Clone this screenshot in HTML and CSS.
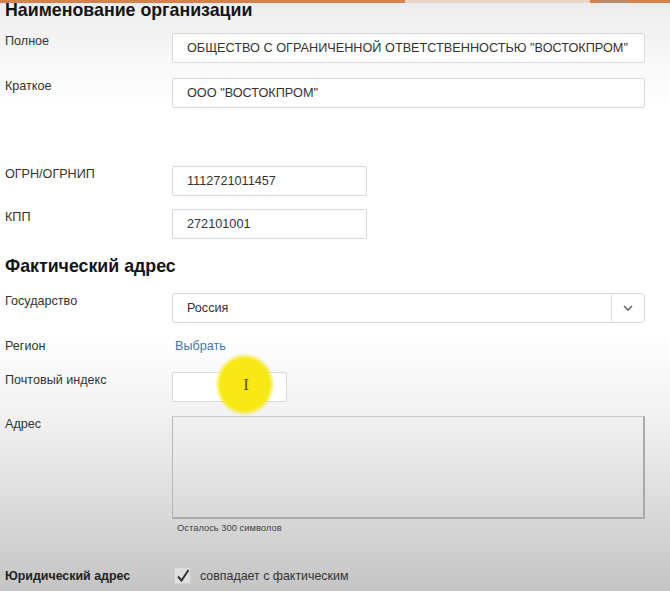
FILE: index.html
```html
<!DOCTYPE html>
<html lang="ru">
<head>
    <meta charset="UTF-8">
    <meta name="viewport" content="width=device-width, initial-scale=1.0">
    <title>Регистрация организации</title>
    <link rel="stylesheet" href="styles.css">
</head>
<body>

    <div class="topbar"><span class="tab"></span><span class="tab-end"></span></div>

    <div class="form">
        <h2 class="section-title first">Наименование организации</h2>

        <div class="row">
            <label class="label">Полное</label>
            <div class="input wide">ОБЩЕСТВО С ОГРАНИЧЕННОЙ ОТВЕТСТВЕННОСТЬЮ "ВОСТОКПРОМ"</div>
        </div>
        <div class="row">
            <label class="label">Краткое</label>
            <div class="input wide">ООО "ВОСТОКПРОМ"</div>
        </div>

        <div class="row spaced">
            <label class="label">ОГРН/ОГРНИП</label>
            <div class="input medium">1112721011457</div>
        </div>
        <div class="row">
            <label class="label">КПП</label>
            <div class="input medium">272101001</div>
        </div>

        <h2 class="section-title">Фактический адрес</h2>

        <div class="row">
            <label class="label">Государство</label>
            <div class="select wide">
                <span class="select-value">Россия</span>
                <span class="select-arrow">
                    <svg width="10" height="6" viewBox="0 0 10 6"><path d="M1 1l4 4 4-4" fill="none" stroke="#666" stroke-width="1.6"/></svg>
                </span>
            </div>
        </div>
        <div class="row region">
            <label class="label">Регион</label>
            <a class="link" href="#">Выбрать</a>
        </div>
        <div class="row">
            <label class="label">Почтовый индекс</label>
            <div class="input short"></div>
        </div>
        <div class="row address">
            <label class="label">Адрес</label>
            <div class="field">
                <div class="textarea wide"></div>
                <div class="hint">Осталось 300 символов</div>
            </div>
        </div>

        <div class="row legal">
            <span class="label bold">Юридический адрес</span>
            <span class="checkbox">
                <svg width="14" height="14" viewBox="0 0 14 14"><path d="M2 7.5l3.5 4L12.5 1" fill="none" stroke="#333" stroke-width="2"/></svg>
            </span>
            <span class="check-text">совпадает с фактическим</span>
        </div>
    </div>

    <!-- cursor highlight from the screen recording -->
    <div class="cursor-spot"><span class="ibeam">I</span></div>

</body>
</html>
```

FILE: styles.css
```css
* {
    margin: 0;
    padding: 0;
    box-sizing: border-box;
}

body {
    font-family: "Liberation Sans", Arial, sans-serif;
    color: #333;
    height: 591px;
    overflow: hidden;
    background: linear-gradient(180deg, #ececec 0px, #f8f8f8 60px, #ffffff 110px, #ffffff 330px, #f3f3f3 410px, #e2e2e2 480px, #d2d2d2 540px, #c4c4c4 591px);
}

.topbar {
    height: 3px;
    background: #d5814e;
    display: flex;
}

.topbar .tab {
    width: 185px;
    margin-left: 405px;
    background: #e9d6c9;
}

.topbar .tab-end {
    width: 30px;
    margin-left: 8px;
    background: #b9876a;
}

.form {
    padding: 0 25px 0 5px;
}

.section-title {
    font-size: 17.8px;
    line-height: 20px;
    font-weight: bold;
    color: #151515;
    margin: 17px 0 17px;
}

.section-title.first {
    margin: -3px 0 13px;
}

.row {
    display: flex;
    align-items: flex-start;
    margin-bottom: 15px;
}

.row.spaced {
    margin-top: 58px;
    margin-bottom: 13px;
}

.label {
    width: 167px;
    flex-shrink: 0;
    font-size: 12.6px;
    line-height: 14px;
    padding-top: 1px;
    color: #333;
}

.label.bold {
    font-size: 12.4px;
    font-weight: bold;
    color: #222;
    padding-top: 0;
}

.input {
    height: 30px;
    border: 1px solid #d8d8d8;
    border-radius: 2px;
    background: #fff;
    font-size: 12.7px;
    line-height: 28px;
    padding-left: 14px;
    color: #333;
    white-space: nowrap;
}

.wide {
    width: 473px;
}

.medium {
    width: 195px;
}

.short {
    width: 115px;
}

.select {
    height: 30px;
    border: 1px solid #d8d8d8;
    border-radius: 3px;
    background: #fff;
    display: flex;
    font-size: 12.6px;
    line-height: 28px;
}

.select-value {
    flex: 1;
    padding-left: 14px;
}

.select-arrow {
    width: 33px;
    border-left: 1px solid #e0e0e0;
    display: flex;
    align-items: center;
    justify-content: center;
}

.row.region {
    height: 20px;
    margin-bottom: 14px;
}

.link {
    font-size: 12.6px;
    line-height: 14px;
    padding: 1px 0 0 3px;
    color: #3f78b4;
    text-decoration: none;
}

.row.address {
    margin-top: -1px;
}

.textarea {
    height: 103px;
    border: 1px solid #a9a9a9;
    border-top-color: #c8c8c8;
    border-left-color: #b8b8b8;
    border-width: 1px 2px 2px 1px;
    background: transparent;
}

.hint {
    font-size: 9.4px;
    line-height: 11px;
    margin: 3px 0 0 5px;
    color: #444;
}

.row.legal {
    align-items: center;
    margin-top: 34px;
}

.checkbox {
    width: 17px;
    height: 17px;
    margin-left: 2px;
    border: 1px solid #cfcfcf;
    background: #dedede;
    display: flex;
    align-items: center;
    justify-content: center;
}

.check-text {
    font-size: 12.4px;
    margin-left: 9px;
    color: #333;
}

.cursor-spot {
    position: absolute;
    left: 215px;
    top: 353px;
    width: 60px;
    height: 63px;
    border-radius: 50%;
    background: radial-gradient(closest-side, #f7e816 0%, #f7e816 82%, rgba(247, 232, 22, 0) 100%);
    display: flex;
    align-items: center;
    justify-content: center;
}

.ibeam {
    font-family: "Liberation Serif", serif;
    font-size: 17px;
    color: #5e5520;
    margin-left: 2px;
}
```
